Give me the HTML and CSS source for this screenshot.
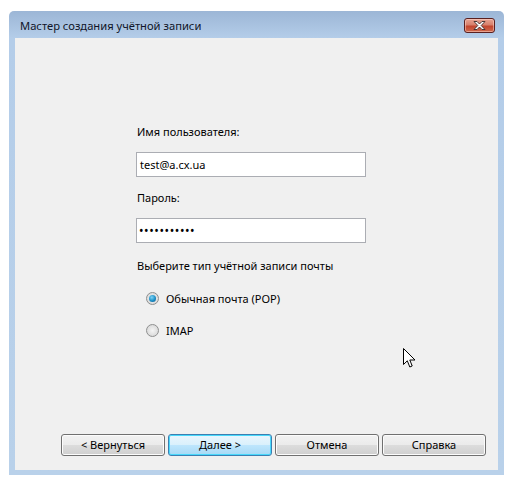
FILE: index.html
```html
<!DOCTYPE html>
<html lang="ru">
<head>
<meta charset="utf-8">
<title>Мастер создания учётной записи</title>
<link rel="stylesheet" href="styles.css">
</head>
<body>
<div class="window">
  <div class="titlebar">
    <span class="title">Мастер создания учётной записи</span>
    <button class="close" aria-label="Закрыть">
      <svg width="15" height="11" viewBox="0 0 15 11">
        <path d="M2 1.5 L5 1.5 L7.5 4 L10 1.5 L13 1.5 L9.2 5.5 L13 9.5 L10 9.5 L7.5 7 L5 9.5 L2 9.5 L5.8 5.5 Z" fill="#ffffff" stroke="#3a2a2a" stroke-width="0.9" stroke-linejoin="round"/>
      </svg>
    </button>
  </div>
  <div class="client">
    <div class="form">
      <label class="label first">Имя пользователя:</label>
      <div class="field">test@a.cx.ua</div>
      <label class="label">Пароль:</label>
      <div class="field dots">•••••••••••</div>
      <div class="label section">Выберите тип учётной записи почты</div>
      <div class="radio-row first-radio"><span class="radio checked"></span><span>Обычная почта (POP)</span></div>
      <div class="radio-row"><span class="radio"></span><span>IMAP</span></div>
    </div>
    <div class="buttons">
      <button class="btn">&lt; Вернуться</button>
      <button class="btn default">Далее &gt;</button>
      <button class="btn">Отмена</button>
      <button class="btn">Справка</button>
    </div>
    <svg class="cursor" width="13" height="21" viewBox="0 0 13 21">
      <path d="M0.5 0.5 L0.5 16.5 L4.3 12.8 L6.8 19 L9.2 18 L6.8 12 L12 12 Z" fill="#ffffff" stroke="#000000" stroke-width="1" stroke-linejoin="miter"/>
    </svg>
  </div>
</div>
</body>
</html>
```

FILE: styles.css
```css
html, body {
  margin: 0;
  padding: 0;
  background: #ffffff;
}

body {
  font-family: "Noto Sans", "Open Sans", "DejaVu Sans", sans-serif;
  font-size: 11px;
  color: #000000;
}

.window {
  margin: 11px 0 0 9px;
  width: 495px;
  height: 464px;
  box-sizing: border-box;
  background: linear-gradient(#9cb6d6 0px, #b4cde9 27px, #b9d1ea 100%);
  border-radius: 5px 5px 0 0;
  padding: 0 6px 5px 6px;
  display: flex;
  flex-direction: column;
}

.titlebar {
  height: 27px;
  display: flex;
  align-items: flex-start;
  justify-content: space-between;
}

.title {
  font-size: 11.2px;
  color: #101528;
  margin: 7px 0 0 5px;
  line-height: 16px;
}

.close {
  margin: 7px 3px 0 0;
  width: 31px;
  height: 15px;
  padding: 0;
  border: 1px solid #5a2020;
  border-radius: 3px;
  background: linear-gradient(#e8a493 0%, #d7806c 45%, #c2452e 55%, #cf6a4e 100%);
  display: flex;
  align-items: center;
  justify-content: center;
  box-shadow: inset 0 0 0 1px rgba(255, 220, 210, 0.5);
}

.close svg {
  display: block;
}

.client {
  position: relative;
  flex: 1;
  background: #f0f0f0;
  display: flex;
  flex-direction: column;
  padding: 0 0 14px 46px;
}

.form {
  margin-left: 75px;
  width: 230px;
  display: flex;
  flex-direction: column;
}

.label {
  line-height: 16px;
  margin: 13px 0 12px 1px;
  color: #000000;
}

.label.first {
  margin-top: 86px;
}

.label.section {
  margin: 15px 0 0 1px;
}

.field {
  height: 25px;
  box-sizing: border-box;
  border: 1px solid #abadb3;
  background: #ffffff;
  padding: 0 4px 0 3px;
  line-height: 23px;
  color: #000000;
}

.field.dots {
  font-size: 12px;
  letter-spacing: 0.6px;
  padding-left: 2px;
}

.radio-row {
  display: flex;
  align-items: center;
  height: 16px;
  margin-top: 16px;
  margin-left: 10px;
}

.radio {
  width: 13px;
  height: 13px;
  box-sizing: border-box;
  border-radius: 50%;
  border: 1px solid #8e8f8f;
  background: radial-gradient(circle at 50% 50%, #f4f4f4 0%, #dcdcdc 70%, #e8e8e8 100%);
  margin-right: 7px;
  flex: none;
  position: relative;
}

.radio.checked::after {
  content: "";
  position: absolute;
  left: 2px;
  top: 2px;
  width: 7px;
  height: 7px;
  border-radius: 50%;
  background: radial-gradient(circle at 40% 35%, #7fd3f5 0%, #1b8fc6 55%, #0a4f88 100%);
}

.buttons {
  margin-top: auto;
  display: flex;
  gap: 3px;
}

.btn {
  width: 104px;
  height: 22px;
  padding: 0;
  box-sizing: border-box;
  border: 1px solid #707070;
  border-radius: 3px;
  background: linear-gradient(#f2f2f2 0%, #ebebeb 50%, #dddddd 50%, #cfcfcf 100%);
  box-shadow: inset 0 0 0 1px #fcfcfc;
  font-family: "Noto Sans", "Open Sans", "DejaVu Sans", sans-serif;
  font-size: 11px;
  color: #000000;
  line-height: 18px;
}

.btn.default {
  border-color: #3c7fb1;
  background: linear-gradient(#eaf6fd 0%, #d9f0fc 50%, #bee6fd 50%, #a7d9f5 100%);
  box-shadow: inset 0 0 0 1px #48d8fb;
}

.cursor {
  position: absolute;
  left: 388px;
  top: 310px;
}
```
